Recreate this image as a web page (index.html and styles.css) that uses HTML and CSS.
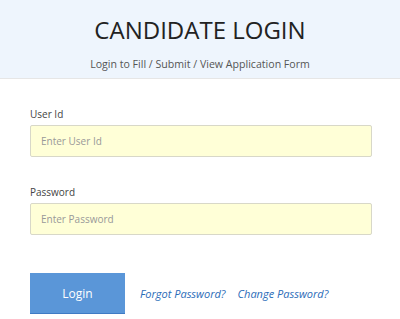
FILE: index.html
```html
<!DOCTYPE html>
<html lang="en">
<head>
  <meta charset="UTF-8">
  <meta name="viewport" content="width=device-width, initial-scale=1.0">
  <title>Candidate Login</title>
  <link rel="stylesheet" href="styles.css">
</head>
<body>
  <header class="login-header">
    <h1>CANDIDATE LOGIN</h1>
    <p>Login to Fill / Submit / View Application Form</p>
  </header>
  <form class="login-form" onsubmit="return false">
    <div class="field">
      <label for="userId">User Id</label>
      <input type="text" id="userId" placeholder="Enter User Id">
    </div>
    <div class="field">
      <label for="password">Password</label>
      <input type="password" id="password" placeholder="Enter Password">
    </div>
    <div class="actions">
      <button type="submit">Login</button>
      <a href="#">Forgot Password?</a>
      <a href="#">Change Password?</a>
    </div>
  </form>
</body>
</html>
```

FILE: styles.css
```css
body {
  font-family: "Open Sans", Arial, sans-serif;
  margin: 0;
  padding: 0;
  background-color: #fff;
}
.login-header {
  background-color: #eef5fd;
  border-bottom: 1px solid #e6e6e6;
  text-align: center;
  height: 79px;
  box-sizing: border-box;
  padding-top: 16px;
}
.login-header h1 {
  margin: 0;
  font-size: 24px;
  font-weight: 400;
  line-height: 28px;
  color: #222;
}
.login-header p {
  margin: 13px 0 0;
  font-size: 10.6px;
  line-height: 14px;
  color: #555;
}
.login-form {
  padding: 28px 28px 0 30px;
}
.field {
  margin-bottom: 28px;
}
.field label {
  display: block;
  font-size: 10px;
  color: #444;
  line-height: 14px;
  margin-bottom: 4px;
}
.field input {
  display: block;
  width: 100%;
  box-sizing: border-box;
  height: 32px;
  padding: 0 10px;
  border: 1px solid #d8d8c8;
  border-radius: 2px;
  background-color: #ffffd7;
  font-family: inherit;
  font-size: 10px;
  color: #333;
}
.field input::placeholder {
  color: #999;
}
.actions {
  display: flex;
  align-items: center;
  margin-top: 38px;
}
.actions button {
  width: 95px;
  height: 41px;
  border: none;
  border-bottom: 1px solid #3f7bc4;
  background-color: #5a96d8;
  color: #fff;
  font-family: inherit;
  font-size: 12px;
  cursor: pointer;
  margin-right: 15px;
}
.actions a {
  font-size: 11px;
  font-style: italic;
  color: #2b6cb8;
  text-decoration: none;
  margin-right: 12px;
}
```
